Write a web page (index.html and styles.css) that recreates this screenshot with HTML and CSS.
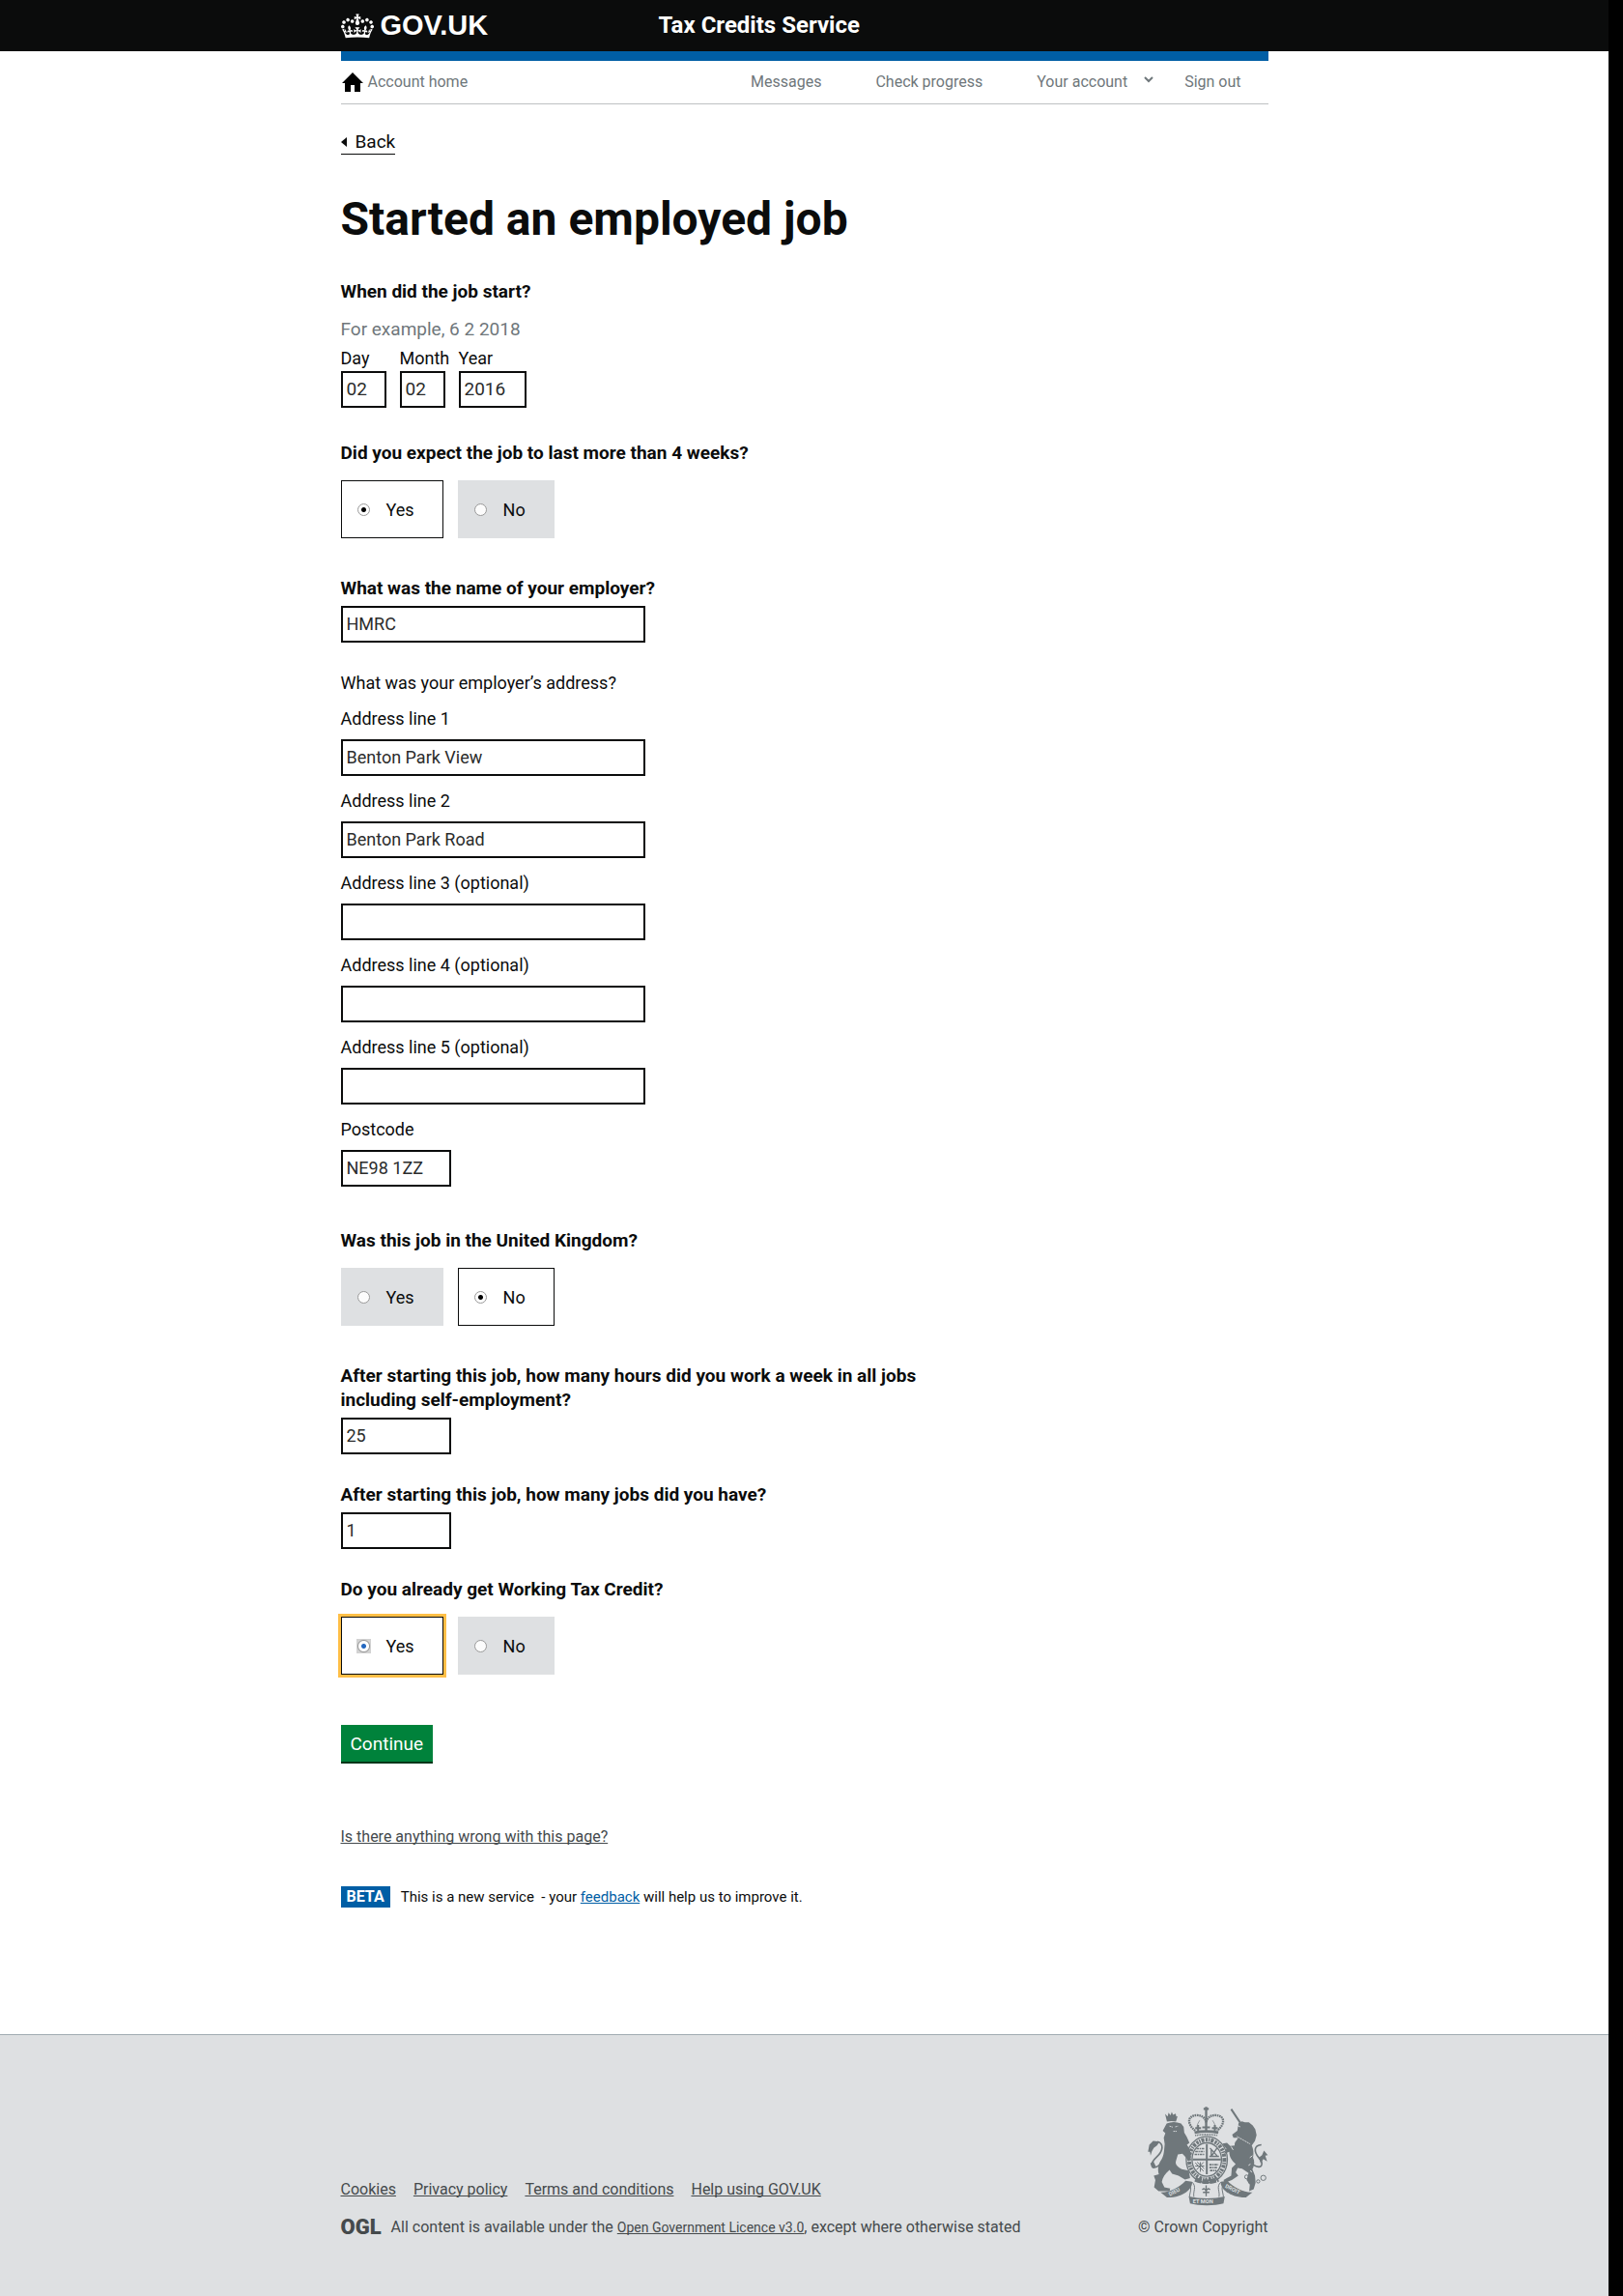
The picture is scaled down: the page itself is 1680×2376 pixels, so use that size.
FILE: index.html
```html
<!DOCTYPE html>
<html lang="en">
<head>
<meta charset="utf-8">
<meta name="viewport" content="width=device-width, initial-scale=1">
<title>Started an employed job - Tax Credits Service - GOV.UK</title>
<link rel="stylesheet" href="styles.css">
</head>
<body>
<header class="header">
  <div class="container header-inner">
    <a class="logo" href="#">
      <svg class="crown" viewBox="0 0 132 97" aria-hidden="true"><path fill="currentColor" d="M25 30.2c3.5 1.5 7.7-.2 9.1-3.7 1.5-3.6-.2-7.8-3.9-9.2-3.6-1.4-7.6.3-9.1 3.9-1.4 3.5.3 7.5 3.9 9zM9 39.5c3.6 1.5 7.8-.2 9.2-3.7 1.5-3.6-.2-7.8-3.9-9.1-3.6-1.5-7.6.2-9.1 3.8-1.4 3.5.3 7.5 3.8 9zM4.4 57.2c3.5 1.5 7.7-.2 9.1-3.8 1.5-3.6-.2-7.7-3.9-9.1-3.5-1.5-7.6.3-9.1 3.8-1.4 3.5.3 7.6 3.9 9.1zm38.3-21.4c3.5 1.5 7.7-.2 9.1-3.8 1.5-3.6-.2-7.7-3.9-9.1-3.6-1.5-7.6.3-9.1 3.8-1.3 3.6.4 7.7 3.9 9.1zm64.4-5.6c-3.6 1.5-7.8-.2-9.1-3.7-1.5-3.6.2-7.8 3.8-9.2 3.6-1.4 7.7.3 9.2 3.9 1.3 3.5-.4 7.5-3.9 9zm15.9 9.3c-3.6 1.5-7.7-.2-9.1-3.7-1.5-3.6.2-7.8 3.7-9.1 3.6-1.5 7.7.2 9.2 3.8 1.5 3.5-.3 7.5-3.8 9zm4.7 17.7c-3.6 1.5-7.8-.2-9.2-3.8-1.5-3.6.2-7.7 3.9-9.1 3.6-1.5 7.7.3 9.2 3.8 1.3 3.5-.4 7.6-3.9 9.1zM89.3 35.8c-3.6 1.5-7.8-.2-9.2-3.8-1.4-3.6.2-7.7 3.9-9.1 3.6-1.5 7.7.3 9.2 3.8 1.4 3.6-.3 7.7-3.9 9.1zM69.7 17.7l8.9 4.7V9.3l-8.9 2.8c-.2-.3-.5-.6-.9-.9L72.4 0H59.6l3.5 11.2c-.3.3-.6.5-.9.9l-8.8-2.8v13.1l8.8-4.7c.3.3.6.7.9.9l-5 15.4v.1c-.2.8-.4 1.6-.4 2.4 0 4.1 3.1 7.5 7 8.1h.2c.3 0 .7.1 1 .1.4 0 .7 0 1-.1h.2c4-.6 7.1-4.1 7.1-8.1 0-.8-.1-1.7-.4-2.4V34l-5.1-15.4c.4-.2.7-.6 1-.9zM66 92.8c16.9 0 32.8 1.1 47.1 3.2 4-16.9 8.9-26.7 14-33.5l-9.6-3.4c1 4.9 1.1 7.2 0 10.2-1.5-1.4-3-4.3-4.2-8.7L108.6 76c2.8-2 5-3.2 7.5-3.3-4.4 9.4-10 11.9-13.6 11.2-4.3-.8-6.3-4.6-5.6-7.9 1-4.7 5.7-5.9 8-.5 4.3-8.7-3-11.4-7.6-8.8 7.1-7.2 7.9-13.5 2.1-21.1-8 6.1-8.1 12.3-4.5 20.8-4.7-5.4-12.1-2.5-9.5 6.2 3.4-5.2 7.9-2 7.2 3.1-.6 4.3-6.4 7.8-13.5 7.2-10.3-.9-10.9-8-11.2-13.8 2.5-.5 7.1 1.8 11 7.3L80.2 60c-4.1 4.4-8 5.3-12.3 5.4 1.4-4.4 8-11.6 8-11.6H55.5s6.4 7.2 7.9 11.6c-4.2-.1-8-1-12.3-5.4l1.4 16.4c3.9-5.5 8.5-7.7 10.9-7.3-.3 5.8-.9 12.8-11.1 13.8-7.2.6-12.9-2.9-13.5-7.2-.7-5 3.8-8.3 7.1-3.1 2.7-8.7-4.6-11.6-9.4-6.2 3.7-8.5 3.6-14.7-4.6-20.8-5.8 7.6-5 13.9 2.2 21.1-4.7-2.6-11.9.1-7.7 8.8 2.3-5.5 7.1-4.2 8.1.5.7 3.3-1.3 7.1-5.7 7.9-3.5.7-9-1.8-13.5-11.2 2.5.1 4.7 1.3 7.5 3.3l-4.7-15.4c-1.2 4.4-2.7 7.2-4.3 8.7-1.1-3-.9-5.3 0-10.2l-9.5 3.4c5 6.9 9.9 16.7 14 33.5 14.8-2.1 30.8-3.2 47.7-3.2z"/></svg>
      <span>GOV.UK</span>
    </a>
    <a class="service-name" href="#">Tax Credits Service</a>
  </div>
</header>

<div class="container">
  <nav class="account-nav" aria-label="Account">
    <a class="home" href="#">
      <svg class="home-icon" viewBox="0 0 22 20" aria-hidden="true"><path d="M11 0 22 11H19V20H13V13H9V20H3V11H0z"/></svg>
      <span>Account home</span>
    </a>
    <ul class="nav-links">
      <li><a href="#">Messages</a></li>
      <li><a href="#">Check progress</a></li>
      <li class="has-menu"><a href="#">Your account<svg class="chevron" viewBox="0 0 10 7" aria-hidden="true"><path d="M1 1l4 4 4-4" fill="none" stroke="currentColor" stroke-width="2"/></svg></a></li>
      <li><a href="#">Sign out</a></li>
    </ul>
  </nav>

  <main>
    <a class="back" href="#">Back</a>
    <h1>Started an employed job</h1>

    <form>
      <fieldset class="group date-group">
        <legend class="question">When did the job start?</legend>
        <p class="hint">For example, 6 2 2018</p>
        <div class="date-row">
          <div class="date-part"><label for="day">Day</label><input class="field" id="day" type="text" value="02"></div>
          <div class="date-part"><label for="month">Month</label><input class="field" id="month" type="text" value="02"></div>
          <div class="date-part year"><label for="year">Year</label><input class="field" id="year" type="text" value="2016"></div>
        </div>
      </fieldset>

      <fieldset class="group choice-group">
        <legend class="question">Did you expect the job to last more than 4 weeks?</legend>
        <div class="choices">
          <label class="choice"><input type="radio" name="weeks" checked>Yes</label>
          <label class="choice"><input type="radio" name="weeks">No</label>
        </div>
      </fieldset>

      <div class="group">
        <label class="question" for="employer">What was the name of your employer?</label>
        <input class="field wide" id="employer" type="text" value="HMRC">
      </div>

      <fieldset class="group address-group">
        <legend>What was your employer’s address?</legend>
        <div class="address-lines">
          <div class="address-line"><label for="line1">Address line 1</label><input class="field wide" id="line1" type="text" value="Benton Park View"></div>
          <div class="address-line"><label for="line2">Address line 2</label><input class="field wide" id="line2" type="text" value="Benton Park Road"></div>
          <div class="address-line"><label for="line3">Address line 3 (optional)</label><input class="field wide" id="line3" type="text"></div>
          <div class="address-line"><label for="line4">Address line 4 (optional)</label><input class="field wide" id="line4" type="text"></div>
          <div class="address-line"><label for="line5">Address line 5 (optional)</label><input class="field wide" id="line5" type="text"></div>
          <div class="address-line"><label for="postcode">Postcode</label><input class="field short" id="postcode" type="text" value="NE98 1ZZ"></div>
        </div>
      </fieldset>

      <fieldset class="group choice-group">
        <legend class="question">Was this job in the United Kingdom?</legend>
        <div class="choices">
          <label class="choice"><input type="radio" name="uk">Yes</label>
          <label class="choice"><input type="radio" name="uk" checked>No</label>
        </div>
      </fieldset>

      <div class="group">
        <label class="question" for="hours">After starting this job, how many hours did you work a week in all jobs including self-employment?</label>
        <input class="field short" id="hours" type="text" value="25">
      </div>

      <div class="group">
        <label class="question" for="jobs">After starting this job, how many jobs did you have?</label>
        <input class="field short" id="jobs" type="text" value="1">
      </div>

      <fieldset class="group choice-group">
        <legend class="question">Do you already get Working Tax Credit?</legend>
        <div class="choices">
          <label class="choice is-focused"><input type="radio" name="wtc" checked>Yes</label>
          <label class="choice"><input type="radio" name="wtc">No</label>
        </div>
      </fieldset>

      <button class="button" type="submit">Continue</button>
    </form>

    <p class="report"><a href="#">Is there anything wrong with this page?</a></p>
    <p class="phase"><strong class="phase-tag">BETA</strong><span>This is a new service &nbsp;- your <a href="#">feedback</a> will help us to improve it.</span></p>
  </main>
</div>

<footer class="footer">
  <div class="container footer-inner">
    <div class="footer-meta">
      <ul class="footer-links">
        <li><a href="#">Cookies</a></li>
        <li><a href="#">Privacy policy</a></li>
        <li><a href="#">Terms and conditions</a></li>
        <li><a href="#">Help using GOV.UK</a></li>
      </ul>
      <div class="licence">
        <span class="ogl">OGL</span>
        <p>All content is available under the <a href="#">Open Government Licence v3.0</a>, except where otherwise stated</p>
      </div>
    </div>
    <a class="copyright" href="#">
      <svg class="crest" viewBox="144 92 376 308" aria-hidden="true">
        <g fill="none" stroke="currentColor">
          <!-- royal crown -->
          <path d="M292 166C266 146 266 118 298 118c16 0 26 10 28 22c2-12 12-22 28-22c32 0 32 28 6 48" stroke-width="7" stroke-dasharray="5 2"/>
          <path d="M326 110v56M318 98h16M326 92v18" stroke-width="7"/>
          <path d="M306 134c-8 12-10 20-8 30M346 134c8 12 10 20 8 30" stroke-width="2"/>
          <path d="M292 158h18M301 148v18M344 158h18M353 148v18M314 156h24" stroke-width="6"/>
          <path d="M290 172q37-8 74 0" stroke-width="8"/>
          <path d="M292 181q35-6 70 0" stroke-width="5" stroke-dasharray="3 2"/>
          <!-- garter and shield -->
          <ellipse cx="328" cy="256" rx="64" ry="72" stroke-width="4"/>
          <ellipse cx="328" cy="256" rx="46" ry="52" stroke-width="4"/>
          <ellipse cx="328" cy="256" rx="55" ry="62" stroke-width="12" stroke-dasharray="7 3 4 3 9 4"/>
          <path d="M328 208v94M284 256h88" stroke-width="6"/>
          <path d="M296 222h26M292 231h28M290 240h32M336 272h28M336 281h26M338 290h20" stroke-width="5" stroke-dasharray="8 2 4 2"/>
          <path d="M338 220l22 24M360 220l-18 26M336 246h30M342 226v18" stroke-width="4"/>
          <path d="M292 266l26 26M298 264l22 20M318 264l-22 24M308 264v30M292 276h28" stroke-width="3"/>
          <path d="M292 318q36 14 72 0" stroke-width="14" stroke-dasharray="20 3"/>
          <!-- tails -->
          <path d="M182 272c-28 22-34-2-10-24c20-18 24-42 2-48" stroke-width="5"/>
          <path d="M472 272c30 18 34-4 18-22c-16-18-16-38 8-40" stroke-width="5"/>
          <path d="M404 99l28 42" stroke-width="6"/>
          <!-- chain -->
          <circle cx="452" cy="310" r="6" stroke-width="3"/><circle cx="463" cy="326" r="5" stroke-width="3"/>
          <circle cx="488" cy="324" r="5" stroke-width="3"/><circle cx="504" cy="313" r="8" stroke-width="3"/>
          <!-- ribbon folds -->
          <path d="M266 332c20 4 10 22 8 40M388 332c-20 4-10 22-8 40M282 326c16 14 2 30 6 46M372 326c-16 14-2 30-6 46" stroke-width="3"/>
          <!-- fleur -->
          <path d="M326 336v34M316 358h20M314 350c6-8 12 0 12 8c0-8 6-16 12-8" stroke-width="4"/>
        </g>
        <g fill="currentColor">
          <!-- lion -->
          <path d="M198 114l8 8 3-12 6 8 4-10 4 9 8-4 2 9 4-1-5 17q-14-4-28 0z"/>
          <path d="M203 144q22-10 45 0l8 10 2 18 8 14 8 18-8 6 8 12c6 12 6 34-2 40l-10-14-10-10-14 2-6 20c-4 12 8 20 18 26l22 4 4 24-16 4-20-12-20-6-8-12c-14 12-22 24-24 38l8 16 18 4-2 8h-34l-14-12 4-22-5-14 16-4c-4-12-4-30 8-46c8-12 8-30 10-48l-3-20 5-14-8-8z"/>
          <path d="M145 232l4-22 12-12 20 2-8 12-10 8-6 10-4 14-2-12zM152 268l10-6 8 16-10 4z"/>
          <!-- unicorn -->
          <path d="M427 142l10-5 10 3 12 0 12 10 8 12 4 18-5 18-10 14c6 12 6 26 4 38c6 12 4 26-2 36l8 20 2 22-6 20-14 6 2-20-10-14 6-22-20-14-14-2-6 14 8 10-20 14-22 8-4-8 24-14 2-24 12-12c-12-10-20-22-20-38l-15 6 6-16-8-8-4-8 14-2 10 10 14-2c-2-12 8-16 10-24l-14 0-4-10 16-12z"/>
          <path d="M506 228l12 14-8 2 6 18-12-8-8 14-6-18 10-8z"/>
          <!-- ribbons -->
          <path d="M184 358c24 2 58-14 78-36l20 3c4 16-22 50-78 49zM470 358c-24 2-58-14-78-36l-20 3c-4 16 22 50 78 49zM272 371c34 8 78 8 112 0l-4 22c-26 8-78 8-104 0z"/>
        </g>
        <g fill="none" stroke="#dee0e2" stroke-width="3">
          <path d="M212 152l10 3M230 154l8-2M224 168h10M422 184l42 24" stroke-dasharray="4 2"/>
          <path d="M424 150l8 4M470 244l-8 6M464 270l-6 4M404 216l6 10M464 290l4 6"/>
        </g>
        <g class="motto" fill="#dee0e2">
          <text transform="translate(213 370) rotate(-27)">DIEU</text>
          <text x="285" y="392">ET MON</text>
          <text transform="translate(384 342) rotate(27)">DROIT</text>
        </g>
      </svg>
      <span>© Crown Copyright</span>
    </a>
  </div>
</footer>
</body>
</html>
```
FILE: styles.css
```css
* { box-sizing: border-box; }

html { background: #000; }

body {
  margin: 0 15px 0 0;
  background: #fff;
  color: #0b0c0c;
  font-family: Roboto, "Liberation Sans", Arial, sans-serif;
  font-size: 18px;
  line-height: 25px;
}

a { color: inherit; text-decoration-skip-ink: none; }
p, ul, h1, fieldset { margin: 0; padding: 0; border: 0; }
ul { list-style: none; }
fieldset { min-width: 0; }
legend { padding: 0; }
input, button { font: inherit; margin: 0; border-radius: 0; }

.container { max-width: 960px; margin: 0 auto; }

/* Header */
.header { background: #0b0c0c; color: #fff; }
.header-inner { display: grid; grid-template-columns: 329px 1fr; align-items: center; height: 53px; }
.header a { text-decoration: none; font-weight: 700; }
.logo { display: flex; align-items: center; gap: 7px; font-family: "Liberation Sans", Arial, sans-serif; font-size: 29px; }
.crown { width: 34px; height: 26px; }
.service-name { font-size: 24px; }

/* Account navigation */
.account-nav {
  display: flex;
  justify-content: space-between;
  align-items: center;
  height: 55px;
  padding-right: 28px;
  border-top: 10px solid #005ea5;
  border-bottom: 1px solid #bfc1c3;
  color: #6f777b;
  font-size: 16px;
  line-height: 20px;
}
.account-nav a { text-decoration: none; }
.home { display: flex; align-items: center; gap: 5px; padding-left: 1px; }
.home-icon { width: 22px; height: 20px; fill: #000; }
.nav-links { display: flex; gap: 56px; }
.has-menu { margin-right: -24px; }
.chevron { width: 10px; height: 7px; margin-left: 17px; vertical-align: 4px; }

/* Page head */
.back {
  display: inline-flex;
  align-items: center;
  gap: 9px;
  margin-top: 26px;
  border-bottom: 1px solid #0b0c0c;
  font-size: 19px;
  text-decoration: none;
}
.back::before { content: ""; border: 5px solid transparent; border-left: 0; border-right: 6px solid #0b0c0c; }
h1 { margin: 39px 0 35px; font-size: 48px; line-height: 55px; font-weight: 700; }

/* Form */
.group { margin-bottom: 29px; }
.question { display: block; max-width: 600px; font-size: 19px; font-weight: 700; }
.field {
  display: block;
  width: 100%;
  height: 38px;
  padding: 0 4px 2px;
  border: 2px solid #0b0c0c;
  background: #fff;
  color: #2b2c2c;
}
.question + .field { margin-top: 6px; }
.wide { max-width: 315px; }
.short { max-width: 114px; }

.date-group { margin-bottom: 34px; }
.hint { margin: 14px 0 5px; color: #6f777b; font-size: 19px; }
.date-row { display: flex; gap: 14px; }
.date-part { display: grid; grid-template-columns: 100%; gap: 1px; width: 47px; }
.date-part label { white-space: nowrap; }
.date-part .field { font-size: 19px; }
.year { width: 70px; }

.choice-group { margin-bottom: 39px; }
.choices { display: flex; gap: 15px; margin-top: 16px; }
.choice {
  display: flex;
  align-items: center;
  gap: 17px;
  height: 60px;
  padding: 0 29px 0 16px;
  border: 1px solid #dee0e2;
  background: #dee0e2;
}
.choice:has(:checked) { border-color: #0b0c0c; background: #fff; }
.choice input {
  appearance: none;
  width: 13px;
  height: 13px;
  border: 1px solid #999;
  border-radius: 50%;
  background: #fcfcfc;
}
.choice input:checked { background: radial-gradient(circle, #000 0 2px, #fff 3px); }
.is-focused { outline: 3px solid #ffbf47; }
.choice.is-focused input {
  width: 15px;
  height: 15px;
  margin: 0 -1px;
  border: 0;
  border-radius: 0;
  background: radial-gradient(circle, #2468c0 0 2px, #fff 3px 5px, #999 6px, #d2d2d2 7px);
}

.address-lines { display: grid; gap: 13px; margin-top: 12px; }
.address-line { display: grid; gap: 9px; }
.address-group { margin-bottom: 43px; }

.button {
  display: block;
  height: 38px;
  margin-top: 52px;
  padding: 0 10px;
  border: 0;
  background: #00823b;
  box-shadow: 0 2px 0 #003618;
  color: #fff;
  font-size: 19px;
}

/* Page foot */
.report { margin-top: 68px; color: #444a4d; font-size: 16px; line-height: 20px; }
.phase { display: flex; align-items: center; gap: 11px; margin: 41px 0 131px; font-size: 15px; line-height: 22px; }
.phase-tag { padding: 0 6px; background: #005ea5; color: #fff; font-size: 16px; }
.phase a { color: #005ea5; }

/* Footer */
.footer { padding: 74px 0 61px; border-top: 1px solid #a1acb2; background: #dee0e2; color: #454a4c; font-size: 16px; line-height: 20px; }
.footer-inner { display: flex; justify-content: space-between; align-items: flex-end; }
.footer-links { display: flex; gap: 18px; margin-bottom: 19px; }
.licence { display: flex; align-items: center; gap: 10px; }
.licence a { font-size: 14px; }
.ogl { font-size: 22px; font-weight: 900; }
.copyright { display: flex; flex-direction: column; align-items: flex-end; gap: 12px; text-decoration: none; }
.crest { width: 125px; height: 103px; color: #6f777b; }
.motto { font-size: 17px; font-weight: 700; }
```
